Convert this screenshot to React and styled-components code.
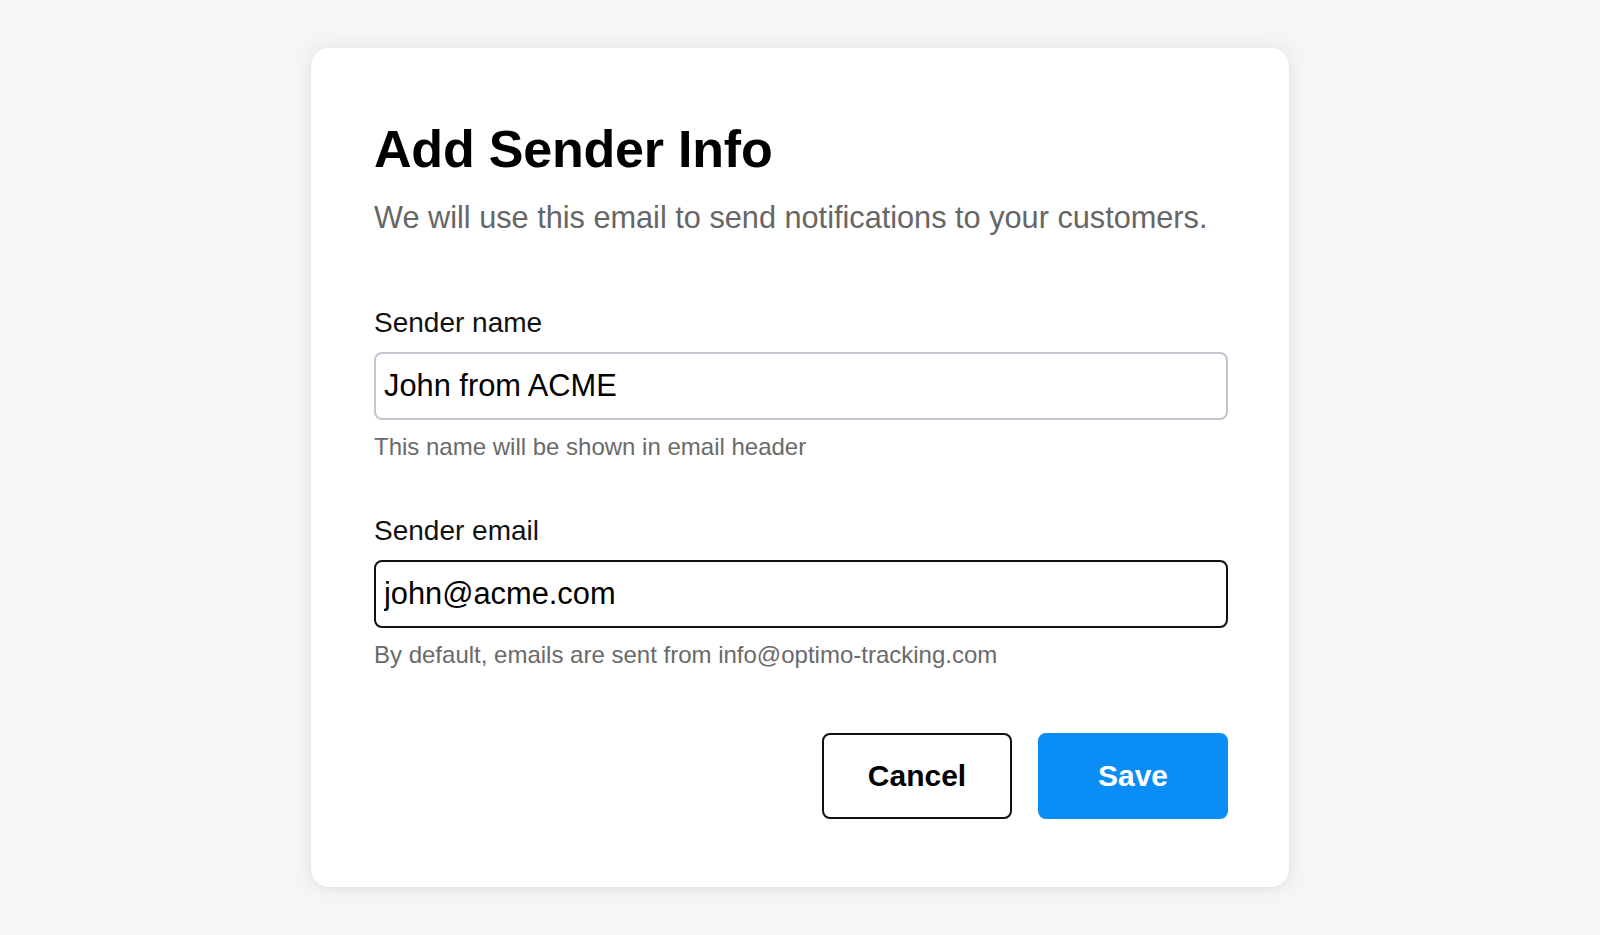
import React from "react";
import styled, { createGlobalStyle } from "styled-components";

const GlobalStyle = createGlobalStyle`
  * { box-sizing: border-box; }
  html, body { margin: 0; padding: 0; }
  body {
    background: #f6f6f6;
    font-family: "Liberation Sans", Arial, Helvetica, sans-serif;
    -webkit-font-smoothing: antialiased;
  }
`;

const Page = styled.div`
  min-height: 100vh;
  display: flex;
  align-items: center;
  justify-content: center;
`;

const Card = styled.div`
  width: 978px;
  background: #ffffff;
  border-radius: 18px;
  box-shadow: 0 0 22px rgba(0, 0, 0, 0.08), 0 2px 6px rgba(0, 0, 0, 0.04);
  padding: 71px 61px 68px 63px;
  display: flex;
  flex-direction: column;
`;

const Title = styled.h1`
  margin: 0;
  font-size: 52px;
  line-height: 60px;
  font-weight: 700;
  color: #000;
  letter-spacing: -0.2px;
`;

const Subtitle = styled.p`
  margin: 21px 0 0;
  font-size: 30.7px;
  line-height: 36px;
  color: #666666;
`;

const Field = styled.div`
  display: flex;
  flex-direction: column;
  margin-top: ${(p) => p.$top}px;
`;

const Label = styled.label`
  font-size: 28px;
  line-height: 34px;
  color: #111;
`;

const Input = styled.input`
  margin-top: 12px;
  height: 68px;
  width: 100%;
  border: 2px solid ${(p) => (p.$active ? "#111111" : "#c4c4d2")};
  border-radius: 8px;
  padding: 0 8px;
  font-family: "Liberation Sans", Arial, Helvetica, sans-serif;
  font-size: 30.8px;
  color: #000;
  background: #fff;
  outline: none;
`;

const Help = styled.div`
  margin-top: 13px;
  font-size: 24px;
  line-height: 28px;
  color: #6a6a6a;
`;

const Actions = styled.div`
  margin-top: 64px;
  display: flex;
  justify-content: flex-end;
  gap: 26px;
`;

const Button = styled.button`
  width: 190px;
  height: 86px;
  border-radius: 8px;
  font-family: "Liberation Sans", Arial, Helvetica, sans-serif;
  font-size: 30px;
  font-weight: 700;
  cursor: pointer;
  border: 2px solid ${(p) => (p.$primary ? "#0a8ef6" : "#111111")};
  background: ${(p) => (p.$primary ? "#0a8ef6" : "#ffffff")};
  color: ${(p) => (p.$primary ? "#ffffff" : "#000000")};
`;

export default function App() {
  return (
    <>
      <GlobalStyle />
      <Page>
        <Card>
          <Title>Add Sender Info</Title>
          <Subtitle>We will use this email to send notifications to your customers.</Subtitle>
          <Field $top={70}>
            <Label>Sender name</Label>
            <Input defaultValue="John from ACME" />
            <Help>This name will be shown in email header</Help>
          </Field>
          <Field $top={53}>
            <Label>Sender email</Label>
            <Input $active defaultValue="john@acme.com" />
            <Help>By default, emails are sent from info@optimo-tracking.com</Help>
          </Field>
          <Actions>
            <Button>Cancel</Button>
            <Button $primary>Save</Button>
          </Actions>
        </Card>
      </Page>
    </>
  );
}
